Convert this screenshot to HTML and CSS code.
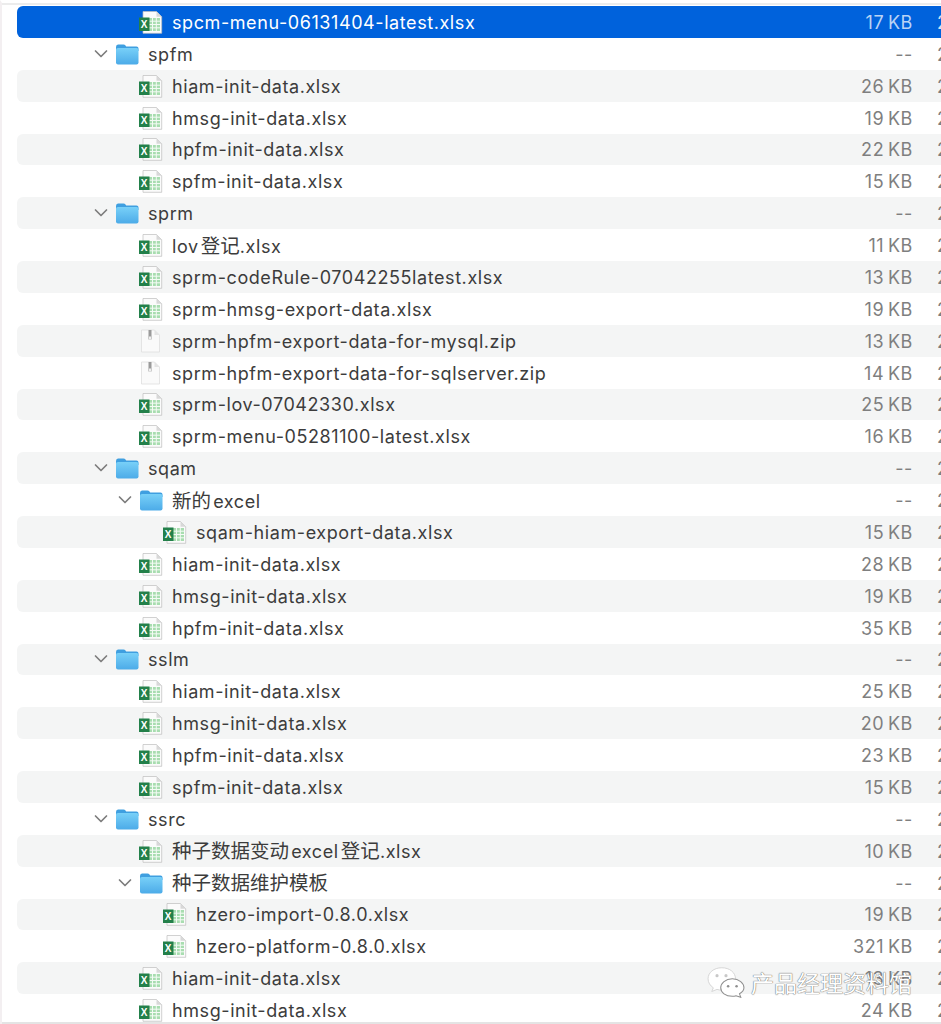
FILE: index.html
```html
<!DOCTYPE html>
<html lang="zh">
<head>
<meta charset="utf-8">
<title>Finder list</title>
<link rel="stylesheet" href="styles.css">
</head>
<body>
<svg class="defs" width="0" height="0" aria-hidden="true">
  <defs>
    <linearGradient id="fold" x1="0" y1="0" x2="0" y2="1"><stop offset="0" stop-color="#78d0f8"/><stop offset="1" stop-color="#4cabe8"/></linearGradient>
    <symbol id="chev" viewBox="0 0 14 10"><path d="M1.500 2 L7 7.500 L12.500 2" fill="none" stroke="#7d7d7d" stroke-width="1.700" stroke-linecap="round" stroke-linejoin="round"/></symbol>
    <symbol id="folder" viewBox="0 0 24 24">
      <path d="M1 5 Q1 2.500 3 2.500 H8.500 Q9.800 2.500 10.500 3.600 L11.200 4.500 H21.500 Q23.500 4.500 23.500 6.500 V9 H1 Z" fill="#3f9fe0"/>
      <path d="M1 7.500 Q1 6 3 6 H21.500 Q23.500 6 23.500 7.500 V20.500 Q23.500 22.500 21.500 22.500 H3 Q1 22.500 1 20.500 Z" fill="url(#fold)"/>
    </symbol>
    <symbol id="xls" viewBox="0 0 24 24">
      <path d="M4 1.500 H17.500 L22.700 6.700 V23.300 H4 Z" fill="#fbfbfb" stroke="#bdbdbd" stroke-width=".7"/>
      <path d="M17.500 1.500 V6.700 H22.700 Z" fill="#d8d8d8"/>
      <path d="M10 8 H21 V21 H10 Z" fill="#a8ddb0"/>
      <path d="M13.500 8 V21 M17.300 8 V21 M10 11.200 H21 M10 14.500 H21 M10 17.800 H21" stroke="#f4fbf5" stroke-width="1"/>
      <rect x="0" y="7.500" width="10.500" height="13.500" fill="#23804a"/>
      <text x="5.200" y="18" class="xmark">X</text>
    </symbol>
    <symbol id="zip" viewBox="0 0 24 24">
      <path d="M2.500 1 H15.500 L20.500 6 V23 H2.500 Z" fill="#fafafa" stroke="#dedede" stroke-width=".8"/>
      <path d="M15.500 1 V6 H20.500 Z" fill="#e4e4e4"/>
      <rect x="9.500" y="1" width="3" height="9.500" fill="#9a9a9a"/>
      <rect x="10" y="7.500" width="2" height="3" fill="#efefef"/>
    </symbol>
    <symbol id="wechat" viewBox="0 0 36 30">
      <path d="M14 1.500 C6.500 1.500 1 6 1 12 C1 15.500 3 18.500 6 20.500 L4.500 24 L9.500 22 C11 22.500 12.500 22.700 14 22.700 C21.500 22.700 27 18 27 12 C27 6 21.500 1.500 14 1.500 Z" fill="#fff" stroke="#d0d0d0" stroke-width=".8"/>
      <path d="M24 12 C17.500 12 13 16 13 20.500 C13 25 17.500 28.500 24 28.500 C25.300 28.500 26.500 28.300 27.500 28 L32 29.500 L30.800 26.200 C33.400 24.700 35 22.700 35 20.500 C35 16 30.500 12 24 12 Z" fill="#fff" stroke="#8f8f8f" stroke-width="1"/>
      <circle cx="9.500" cy="9" r="1.500" fill="#c8c8c8"/><circle cx="18" cy="9" r="1.500" fill="#c8c8c8"/>
      <circle cx="20" cy="19" r="1.200" fill="#8f8f8f"/><circle cx="28" cy="19" r="1.200" fill="#8f8f8f"/>
    </symbol>
  </defs>
</svg>

<main class="list">
  <div class="row lvl1 selected"><span class="twisty"></span><svg class="icon"><use href="#xls"/></svg><span class="name">spcm-menu-06131404-latest.xlsx</span><span class="size">17 KB</span><span class="date">2</span></div>
  <div class="row lvl0"><span class="twisty"><svg class="chev"><use href="#chev"/></svg></span><svg class="icon"><use href="#folder"/></svg><span class="name">spfm</span><span class="size">--</span><span class="date">2</span></div>
  <div class="row lvl1"><span class="twisty"></span><svg class="icon"><use href="#xls"/></svg><span class="name">hiam-init-data.xlsx</span><span class="size">26 KB</span><span class="date">2</span></div>
  <div class="row lvl1"><span class="twisty"></span><svg class="icon"><use href="#xls"/></svg><span class="name">hmsg-init-data.xlsx</span><span class="size">19 KB</span><span class="date">2</span></div>
  <div class="row lvl1"><span class="twisty"></span><svg class="icon"><use href="#xls"/></svg><span class="name">hpfm-init-data.xlsx</span><span class="size">22 KB</span><span class="date">2</span></div>
  <div class="row lvl1"><span class="twisty"></span><svg class="icon"><use href="#xls"/></svg><span class="name">spfm-init-data.xlsx</span><span class="size">15 KB</span><span class="date">2</span></div>
  <div class="row lvl0"><span class="twisty"><svg class="chev"><use href="#chev"/></svg></span><svg class="icon"><use href="#folder"/></svg><span class="name">sprm</span><span class="size">--</span><span class="date">2</span></div>
  <div class="row lvl1"><span class="twisty"></span><svg class="icon"><use href="#xls"/></svg><span class="name">lov <span class="cjk">登记</span>.xlsx</span><span class="size">11 KB</span><span class="date">2</span></div>
  <div class="row lvl1"><span class="twisty"></span><svg class="icon"><use href="#xls"/></svg><span class="name">sprm-codeRule-07042255latest.xlsx</span><span class="size">13 KB</span><span class="date">2</span></div>
  <div class="row lvl1"><span class="twisty"></span><svg class="icon"><use href="#xls"/></svg><span class="name">sprm-hmsg-export-data.xlsx</span><span class="size">19 KB</span><span class="date">2</span></div>
  <div class="row lvl1"><span class="twisty"></span><svg class="icon"><use href="#zip"/></svg><span class="name">sprm-hpfm-export-data-for-mysql.zip</span><span class="size">13 KB</span><span class="date">2</span></div>
  <div class="row lvl1"><span class="twisty"></span><svg class="icon"><use href="#zip"/></svg><span class="name">sprm-hpfm-export-data-for-sqlserver.zip</span><span class="size">14 KB</span><span class="date">2</span></div>
  <div class="row lvl1"><span class="twisty"></span><svg class="icon"><use href="#xls"/></svg><span class="name">sprm-lov-07042330.xlsx</span><span class="size">25 KB</span><span class="date">2</span></div>
  <div class="row lvl1"><span class="twisty"></span><svg class="icon"><use href="#xls"/></svg><span class="name">sprm-menu-05281100-latest.xlsx</span><span class="size">16 KB</span><span class="date">2</span></div>
  <div class="row lvl0"><span class="twisty"><svg class="chev"><use href="#chev"/></svg></span><svg class="icon"><use href="#folder"/></svg><span class="name">sqam</span><span class="size">--</span><span class="date">2</span></div>
  <div class="row lvl1"><span class="twisty"><svg class="chev"><use href="#chev"/></svg></span><svg class="icon"><use href="#folder"/></svg><span class="name"><span class="cjk">新的</span> excel</span><span class="size">--</span><span class="date">2</span></div>
  <div class="row lvl2"><span class="twisty"></span><svg class="icon"><use href="#xls"/></svg><span class="name">sqam-hiam-export-data.xlsx</span><span class="size">15 KB</span><span class="date">2</span></div>
  <div class="row lvl1"><span class="twisty"></span><svg class="icon"><use href="#xls"/></svg><span class="name">hiam-init-data.xlsx</span><span class="size">28 KB</span><span class="date">2</span></div>
  <div class="row lvl1"><span class="twisty"></span><svg class="icon"><use href="#xls"/></svg><span class="name">hmsg-init-data.xlsx</span><span class="size">19 KB</span><span class="date">2</span></div>
  <div class="row lvl1"><span class="twisty"></span><svg class="icon"><use href="#xls"/></svg><span class="name">hpfm-init-data.xlsx</span><span class="size">35 KB</span><span class="date">2</span></div>
  <div class="row lvl0"><span class="twisty"><svg class="chev"><use href="#chev"/></svg></span><svg class="icon"><use href="#folder"/></svg><span class="name">sslm</span><span class="size">--</span><span class="date">2</span></div>
  <div class="row lvl1"><span class="twisty"></span><svg class="icon"><use href="#xls"/></svg><span class="name">hiam-init-data.xlsx</span><span class="size">25 KB</span><span class="date">2</span></div>
  <div class="row lvl1"><span class="twisty"></span><svg class="icon"><use href="#xls"/></svg><span class="name">hmsg-init-data.xlsx</span><span class="size">20 KB</span><span class="date">2</span></div>
  <div class="row lvl1"><span class="twisty"></span><svg class="icon"><use href="#xls"/></svg><span class="name">hpfm-init-data.xlsx</span><span class="size">23 KB</span><span class="date">2</span></div>
  <div class="row lvl1"><span class="twisty"></span><svg class="icon"><use href="#xls"/></svg><span class="name">spfm-init-data.xlsx</span><span class="size">15 KB</span><span class="date">2</span></div>
  <div class="row lvl0"><span class="twisty"><svg class="chev"><use href="#chev"/></svg></span><svg class="icon"><use href="#folder"/></svg><span class="name">ssrc</span><span class="size">--</span><span class="date">2</span></div>
  <div class="row lvl1"><span class="twisty"></span><svg class="icon"><use href="#xls"/></svg><span class="name"><span class="cjk">种子数据变动</span> excel <span class="cjk">登记</span>.xlsx</span><span class="size">10 KB</span><span class="date">2</span></div>
  <div class="row lvl1"><span class="twisty"><svg class="chev"><use href="#chev"/></svg></span><svg class="icon"><use href="#folder"/></svg><span class="name"><span class="cjk">种子数据维护模板</span></span><span class="size">--</span><span class="date">2</span></div>
  <div class="row lvl2"><span class="twisty"></span><svg class="icon"><use href="#xls"/></svg><span class="name">hzero-import-0.8.0.xlsx</span><span class="size">19 KB</span><span class="date">2</span></div>
  <div class="row lvl2"><span class="twisty"></span><svg class="icon"><use href="#xls"/></svg><span class="name">hzero-platform-0.8.0.xlsx</span><span class="size">321 KB</span><span class="date">2</span></div>
  <div class="row lvl1"><span class="twisty"></span><svg class="icon"><use href="#xls"/></svg><span class="name">hiam-init-data.xlsx</span><span class="size">13 KB</span><span class="date">2</span></div>
  <div class="row lvl1"><span class="twisty"></span><svg class="icon"><use href="#xls"/></svg><span class="name">hmsg-init-data.xlsx</span><span class="size">24 KB</span><span class="date">2</span></div>
</main>

<div class="watermark"><svg class="wm-icon"><use href="#wechat"/></svg><span class="wm-text">产品经理资料馆</span></div>
</body>
</html>
```

FILE: styles.css
```css
html, body {
  margin: 0;
  height: 1024px;
  overflow: hidden;
  background: #fff;
}
body {
  position: relative;
  font-family: Inter, "Noto Sans CJK SC", sans-serif;
  color: #3c3c3c;
  box-sizing: border-box;
  border-top: 3px solid #fff;
  border-left: 2px solid #f3eff1;
}
body::after {
  content: "";
  position: absolute;
  left: 0;
  right: 0;
  bottom: 0;
  height: 2px;
  background: #e4e4e4;
}
.defs { position: absolute; }
.xmark {
  font: bold 10px "Liberation Sans", sans-serif;
  fill: #fff;
  text-anchor: middle;
}
.list {
  display: flex;
  flex-direction: column;
  border-top: 2px solid #ececec;
  padding: 1px 0 0 15px;
}
.row {
  display: flex;
  align-items: center;
  flex: 0 0 31.875px;
  height: 31.875px;
  border-radius: 6px 0 0 6px;
  font-size: 18px;
  line-height: 20px;
  white-space: nowrap;
}
.row:nth-child(even) { background: transparent; }
.row:nth-child(odd) { background: #f4f5f5; }
.row.selected { background: #0062dc; color: #fff; }
.lvl0 { padding-left: 77px; }
.lvl1 { padding-left: 101px; }
.lvl2 { padding-left: 125px; }
.twisty {
  flex: 0 0 21px;
  display: flex;
  align-items: center;
}
.chev { width: 14px; height: 10px; }
.icon { flex: 0 0 24px; width: 24px; height: 24px; }
.name {
  flex: 1;
  margin-left: 9px;
  padding-top: 2px;
  letter-spacing: .58px;
  word-spacing: -3.5px;
}
.cjk {
  font-size: 19.5px;
  letter-spacing: 0;
}
.size {
  color: #7f7f7f;
  text-align: right;
  margin-right: 24px;
  padding-top: 2px;
  letter-spacing: .6px;
  word-spacing: -2px;
}
.selected .size { color: #b9d3f5; }
.date { width: 4px; padding-top: 2px; color: #7f7f7f; }
.selected .date { color: #cfe0f7; }
.watermark {
  position: absolute;
  left: 705px;
  top: 962px;
  display: flex;
  align-items: center;
  gap: 6px;
}
.wm-icon { width: 38px; height: 32px; }
.wm-text {
  font-size: 23px;
  color: #fff;
  text-shadow: 0 0 1px #666, 0 0 1px #666;
}
```
